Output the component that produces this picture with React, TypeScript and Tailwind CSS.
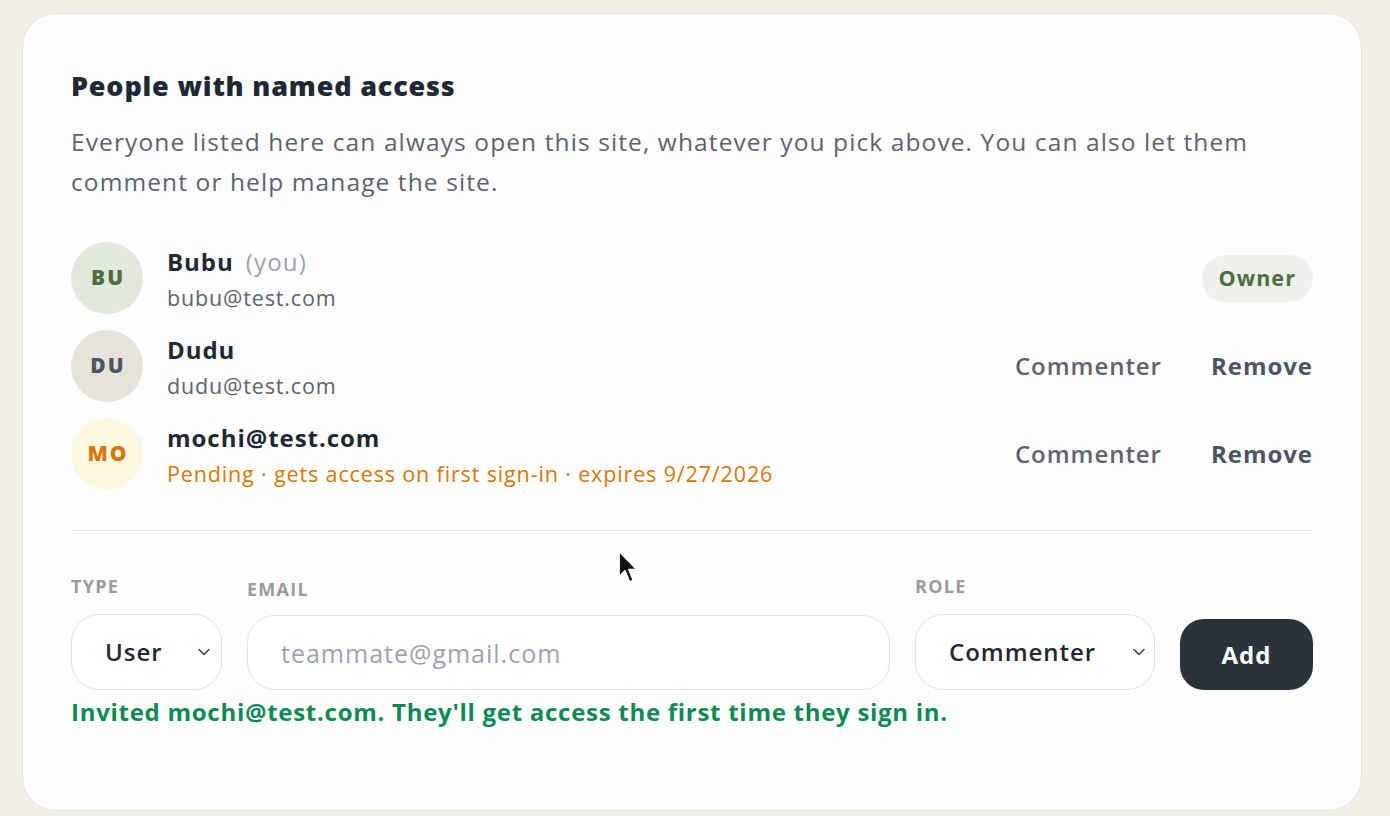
import React, { useState } from 'react';
import { ChevronDown } from 'lucide-react';

type Person = {
  initials: string;
  name: string;
  you?: boolean;
  sub: string;
  pending?: boolean;
  role: 'owner' | 'commenter';
  avatarBg: string;
  avatarText: string;
};

const PEOPLE: Person[] = [
  { initials: 'BU', name: 'Bubu', you: true, sub: 'bubu@test.com', role: 'owner', avatarBg: 'bg-[#e3e8df]', avatarText: 'text-[#4f6d3c]' },
  { initials: 'DU', name: 'Dudu', sub: 'dudu@test.com', role: 'commenter', avatarBg: 'bg-[#e7e3da]', avatarText: 'text-[#4b5563]' },
  {
    initials: 'MO',
    name: 'mochi@test.com',
    sub: 'Pending · gets access on first sign-in · expires 9/27/2026',
    pending: true,
    role: 'commenter',
    avatarBg: 'bg-[#fdf9e1]',
    avatarText: 'text-[#d97706]',
  },
];

const PersonRow: React.FC<{ person: Person }> = ({ person }) => (
  <div className="flex items-start h-[72px]">
    <div className={`w-[72px] h-[72px] rounded-full flex items-center justify-center shrink-0 ${person.avatarBg}`}>
      <span className={`text-[21px] font-extrabold tracking-[0.1em] pl-[0.1em] ${person.avatarText}`}>{person.initials}</span>
    </div>
    <div className="ml-6 pt-[3px] flex-1 flex flex-col">
      <div className="flex items-baseline leading-[34px]">
        <span className="text-[24px] font-bold tracking-[0.04em] text-[#1f2933]">{person.name}</span>
        {person.you && <span className="ml-3 text-[24px] tracking-[0.05em] text-[#9ca3af]">(you)</span>}
      </div>
      <span className={`mt-[2px] text-[21.5px] leading-[34px] tracking-[0.04em] ${person.pending ? 'text-[#d97706]' : 'text-[#5b6470]'}`}>{person.sub}</span>
    </div>
    {person.role === 'owner' ? (
      <span className="self-center px-[17px] h-[47px] flex items-center rounded-full bg-[#eef1eb] text-[21.5px] font-bold tracking-[0.05em] text-[#4f6d3c]">Owner</span>
    ) : (
      <div className="self-center flex items-center gap-[49px]">
        <button className="text-[24px] font-semibold tracking-[0.04em] text-[#5b6470]">Commenter</button>
        <button className="text-[24px] font-bold tracking-[0.04em] text-[#4b5563]">Remove</button>
      </div>
    )}
  </div>
);

const Label: React.FC<{ children: React.ReactNode }> = ({ children }) => (
  <span className="text-[18px] leading-6 font-bold tracking-[0.07em] text-[#9a9b9c] uppercase">{children}</span>
);

const App: React.FC = () => {
  const [email, setEmail] = useState('');

  return (
    <div className="min-h-[816px] bg-[#f2efe7] pt-[13px] pl-[22px] font-['Open_Sans',sans-serif] relative">
      <div className="w-[1340px] min-h-[798px] bg-[#fdfdfd] border border-[#e6e3dc] rounded-[34px] px-12 pt-[55px] pb-10">
        <h2 className="text-[27px] leading-[34px] font-extrabold text-[#1f2933] tracking-[0.03em]">People with named access</h2>
        <p className="mt-[19px] text-[24.5px] leading-[40px] tracking-[0.045em] text-[#5b6470] max-w-[1220px]">
          Everyone listed here can always open this site, whatever you pick above. You can also let them comment or help manage the site.
        </p>

        <div className="mt-10 flex flex-col gap-4">
          {PEOPLE.map((p) => (
            <PersonRow key={p.initials} person={p} />
          ))}
        </div>

        <div className="mt-10 border-t border-[#e4e4e4]" />

        <div className="mt-[43px] flex items-end gap-[25px]">
          <div className="flex flex-col gap-4 w-[151px]">
            <Label>Type</Label>
            <div className="relative">
              <select className="appearance-none w-full h-[76px] rounded-[28px] border border-[#e3e3e3] bg-white pl-[33px] text-[24px] font-semibold tracking-[0.04em] text-[#1f2933] outline-none">
                <option>User</option>
              </select>
              <ChevronDown className="absolute right-[8px] top-1/2 -translate-y-1/2 w-5 h-5 text-[#374151] pointer-events-none" strokeWidth={1.8} />
            </div>
          </div>

          <div className="flex flex-col gap-[14px] flex-1">
            <Label>Email</Label>
            <input
              value={email}
              onChange={(e) => setEmail(e.target.value)}
              placeholder="teammate@gmail.com"
              className="h-[75px] rounded-[28px] border border-[#e3e3e3] bg-white px-[33px] text-[25px] tracking-[0.04em] text-[#1f2933] placeholder-[#9ca3af] outline-none"
            />
          </div>

          <div className="flex flex-col gap-4 w-[240px]">
            <Label>Role</Label>
            <div className="relative">
              <select className="appearance-none w-full h-[76px] rounded-[28px] border border-[#e3e3e3] bg-white pl-[33px] text-[24px] font-semibold tracking-[0.04em] text-[#1f2933] outline-none">
                <option>Commenter</option>
              </select>
              <ChevronDown className="absolute right-[6px] top-1/2 -translate-y-1/2 w-5 h-5 text-[#374151] pointer-events-none" strokeWidth={1.8} />
            </div>
          </div>

          <button className="w-[133px] h-[71px] rounded-[24px] bg-[#2a333b] text-white text-[24px] font-bold tracking-[0.04em]">Add</button>
        </div>

        <p className="mt-[5px] text-[24px] leading-[34px] font-bold tracking-[0.03em] text-[#0f8a55]">
          Invited mochi@test.com. They'll get access the first time they sign in.
        </p>
      </div>

      <svg className="absolute left-[617px] top-[549px]" width="22" height="36" viewBox="0 0 22 36">
        <path d="M2 2 L2 28 L8 22 L12.5 33 L16.5 31.3 L12 20.6 L20 20.6 Z" fill="#111" stroke="#fff" strokeWidth="1.8" strokeLinejoin="round" />
      </svg>
    </div>
  );
};

export default App;
